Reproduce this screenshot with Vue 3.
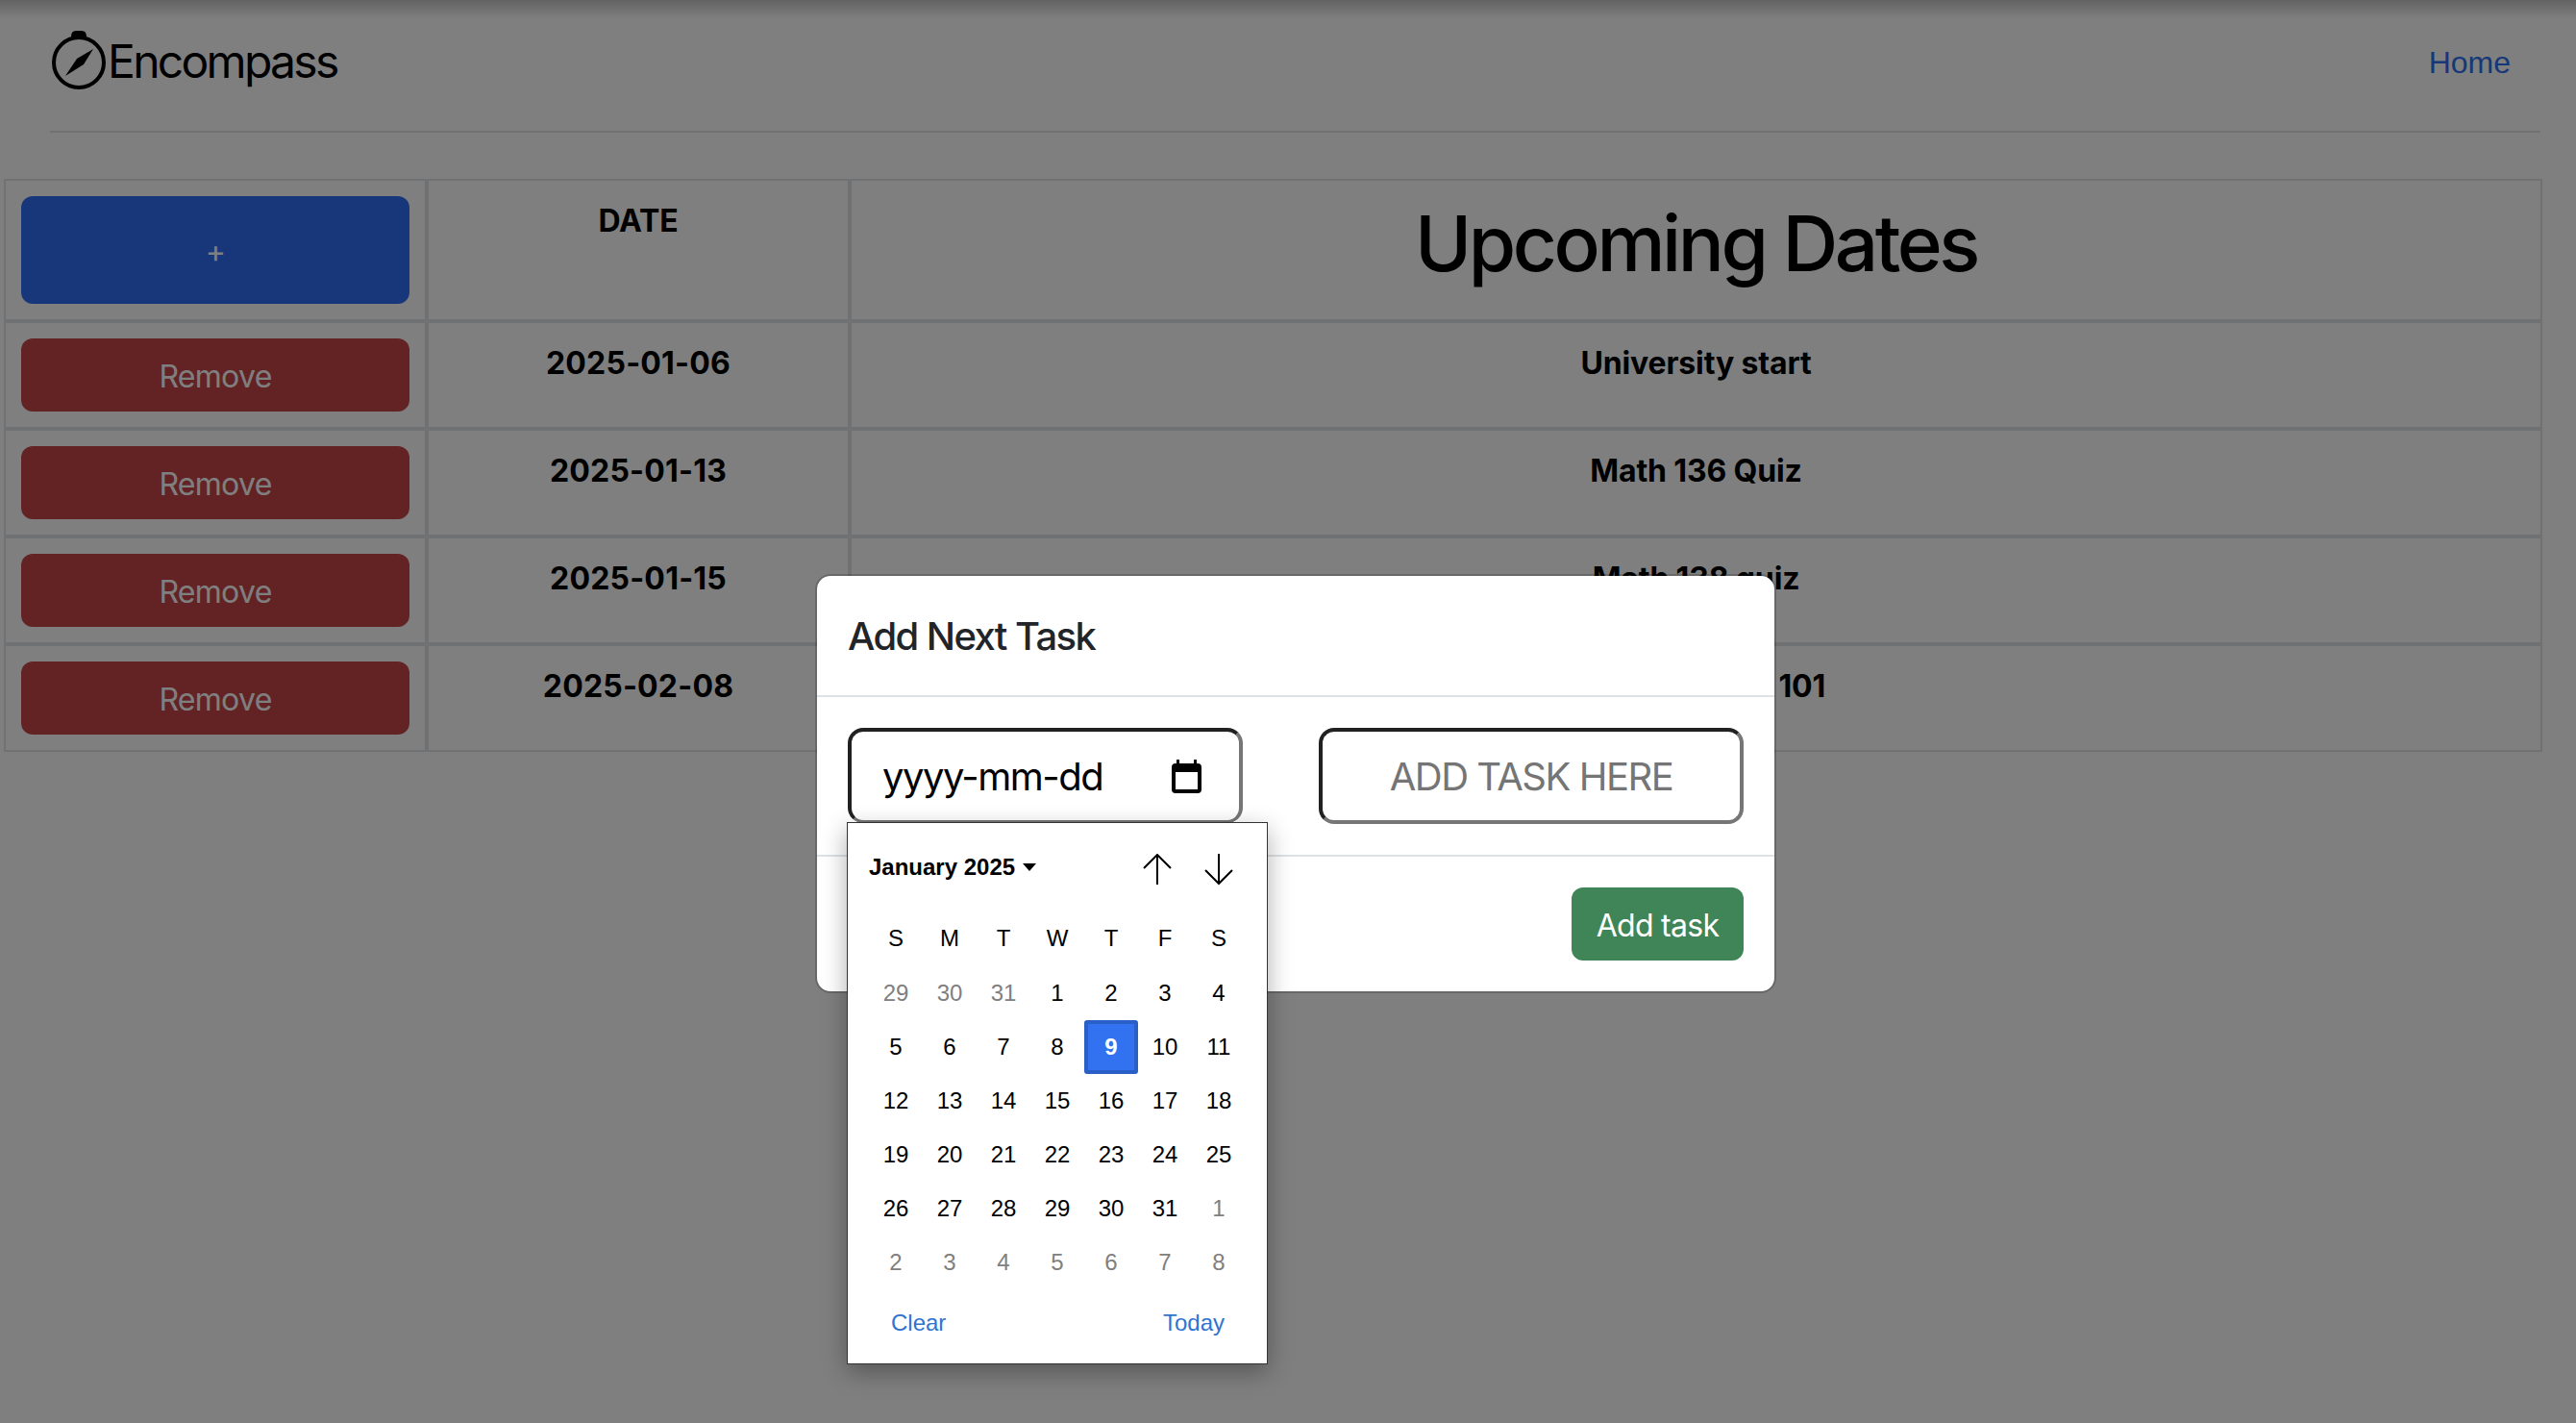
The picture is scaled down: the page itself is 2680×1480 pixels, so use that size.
<template>
  <div class="page">
    <header class="site-header">
      <a class="brand" href="#">
        <svg class="logo" viewBox="0 0 60 64" width="60" height="64">
          <circle cx="30" cy="33" r="26" fill="none" stroke="#000" stroke-width="4" />
          <path d="M22 6 Q22 0 27 0 L33 0 Q38 0 38 6 Z" fill="#000" />
          <path d="M16 47 L28 29 L45 19 L35 35 Z" fill="#000" />
        </svg>
        <span class="brand-name">Encompass</span>
      </a>
      <a class="home-link" href="#">Home</a>
    </header>

    <table class="dates">
      <thead>
        <tr>
          <th class="action-col"><button class="btn btn-add" type="button">+</button></th>
          <th class="date-col">DATE</th>
          <th><h1>Upcoming Dates</h1></th>
        </tr>
      </thead>
      <tbody>
        <tr v-for="row in rows" :key="row.date">
          <td><button class="btn btn-remove" type="button">Remove</button></td>
          <td class="date-cell">{{ row.date }}</td>
          <td>{{ row.name }}</td>
        </tr>
      </tbody>
    </table>

    <div class="backdrop"></div>
    <div class="top-shade"></div>

    <div class="modal">
      <div class="modal-header">Add Next Task</div>
      <div class="modal-body">
        <div class="date-input">
          <span>yyyy-mm-dd</span>
          <svg class="cal-icon" viewBox="0 0 31 35" width="31" height="35">
            <path d="M5 0h3v4h15V0h3v4h1q4 0 4 4v23q0 4-4 4H4q-4 0-4-4V8q0-4 4-4h1z M4 13v18h23V13z" fill="#000" fill-rule="evenodd" />
          </svg>
        </div>
        <input class="task-input" type="text" placeholder="ADD TASK HERE" />
      </div>
      <div class="modal-footer">
        <button class="btn btn-save" type="button">Add task</button>
      </div>
    </div>

    <div class="picker">
      <div class="picker-head">
        <div class="month">
          January 2025
          <span class="caret"></span>
        </div>
        <div class="arrows">
          <svg viewBox="0 0 30 33" width="30" height="33">
            <path d="M15 32V1M1 15L15 1l14 14" fill="none" stroke="#000" stroke-width="2" />
          </svg>
          <svg viewBox="0 0 30 33" width="30" height="33">
            <path d="M15 0v31M1 17l14 14 14-14" fill="none" stroke="#000" stroke-width="2" />
          </svg>
        </div>
      </div>
      <div class="week">
        <span v-for="(d, i) in weekdays" :key="i" class="cell">{{ d }}</span>
      </div>
      <div class="days">
        <span
          v-for="(d, i) in days"
          :key="i"
          class="cell"
          :class="{ muted: d.muted, selected: d.selected }"
        >{{ d.label }}</span>
      </div>
      <div class="picker-foot">
        <a href="#">Clear</a>
        <a href="#">Today</a>
      </div>
    </div>
  </div>
</template>

<script setup>
const rows = [
  { date: "2025-01-06", name: "University start" },
  { date: "2025-01-13", name: "Math 136 Quiz" },
  { date: "2025-01-15", name: "Math 138 quiz" },
  { date: "2025-02-08", name: "Anthropology 101" },
];

const weekdays = ["S", "M", "T", "W", "T", "F", "S"];

// 6 rows, starts on Dec 29
const days = [];
for (const n of [29, 30, 31]) days.push({ label: n, muted: true });
for (let n = 1; n <= 31; n++) days.push({ label: n, selected: n === 9 });
for (let n = 1; n <= 8; n++) days.push({ label: n, muted: true });
</script>

<style>
html,
body {
  margin: 0;
  background: #fff;
}
</style>

<style scoped>
.page {
  position: relative;
  width: 2680px;
  height: 1480px;
  overflow: hidden;
  background: #fff;
  font-family: Inter, "Liberation Sans", sans-serif;
  color: #000;
}

.site-header {
  display: flex;
  justify-content: space-between;
  align-items: center;
  box-sizing: border-box;
  height: 138px;
  margin: 0 37px 48px 52px;
  padding-bottom: 8px;
  border-bottom: 2px solid #dee2e6;
}
.brand {
  display: flex;
  align-items: center;
  color: #000;
  text-decoration: none;
}
.logo {
  flex: none;
}
.brand-name {
  font-size: 48px;
  line-height: 60px;
  letter-spacing: -2.7px;
}
.home-link {
  margin-right: 31px;
  padding-top: 3px;
  font-family: "Liberation Sans", sans-serif;
  font-size: 32px;
  color: #2f6ff0;
  text-decoration: none;
}

.dates {
  width: 2641px;
  margin-left: 4px;
  border-collapse: separate;
  border-spacing: 0;
  table-layout: fixed;
}
.dates th,
.dates td {
  box-sizing: border-box;
  padding: 16px;
  border: 2px solid #dee2e6;
  font-size: 32px;
  font-weight: 700;
  line-height: 52px;
  letter-spacing: -0.15px;
  text-align: center;
  vertical-align: top;
}
.dates td.date-cell {
  letter-spacing: 0.2px;
}
.action-col,
.date-col {
  width: 440px;
}
.dates h1 {
  margin: 0;
  font-size: 80px;
  font-weight: 500;
  line-height: 98px;
  letter-spacing: -3.45px;
}

.btn {
  display: block;
  padding: 3px 0 0;
  border: 0;
  border-radius: 12px;
  color: #fff;
  font-family: inherit;
  font-size: 32px;
  font-weight: 400;
  line-height: 48px;
  letter-spacing: -0.7px;
}
.btn-add,
.btn-remove {
  width: 100%;
}
.btn-add {
  height: 112px;
  background: #306ef4;
}
.btn-remove {
  height: 76px;
  background: #c64449;
}
.btn-save {
  width: 179px;
  height: 76px;
  background: #408558;
}

.backdrop {
  position: absolute;
  inset: 0;
  background: rgba(0, 0, 0, 0.5);
}
.top-shade {
  position: absolute;
  top: 0;
  left: 0;
  right: 0;
  height: 20px;
  background: linear-gradient(rgba(0, 0, 0, 0.22), rgba(0, 0, 0, 0));
}

.modal {
  position: absolute;
  top: 597px;
  left: 848px;
  box-sizing: border-box;
  width: 1000px;
  height: 436px;
  background: #fff;
  border: 2px solid rgba(0, 0, 0, 0.18);
  border-radius: 16px;
  background-clip: padding-box;
  color: #212529;
}
.modal-header {
  box-sizing: border-box;
  height: 126px;
  padding: 33px 32px 0;
  border-bottom: 2px solid #dee2e6;
  font-size: 40px;
  font-weight: 500;
  line-height: 60px;
  letter-spacing: -1.6px;
}
.modal-body {
  display: flex;
  justify-content: space-between;
  box-sizing: border-box;
  height: 166px;
  padding: 32px 32px 0 32px;
  border-bottom: 2px solid #dee2e6;
}
.date-input,
.task-input {
  box-sizing: border-box;
  border-width: 4px;
  border-style: solid;
  border-color: #212121 #767676 #767676 #212121;
  border-radius: 16px;
  font-family: Inter, "Liberation Sans", sans-serif;
  font-size: 40px;
  letter-spacing: -1.5px;
  color: #000;
}
.date-input {
  display: flex;
  align-items: center;
  justify-content: space-between;
  width: 411px;
  height: 99px;
  padding: 0 39px 0 32px;
  border-bottom-width: 3px;
}
.task-input {
  width: 442px;
  height: 100px;
  padding: 0 16px;
  text-align: center;
  outline: none;
  background: #fff;
}
.task-input::placeholder {
  color: #757575;
  opacity: 1;
}
.cal-icon {
  flex: none;
}
.modal-footer {
  display: flex;
  justify-content: flex-end;
  padding: 32px;
}

.picker {
  position: absolute;
  top: 855px;
  left: 881px;
  box-sizing: border-box;
  width: 438px;
  height: 564px;
  padding: 0 22px;
  background: #fff;
  border: 1px solid #333;
  box-shadow: 0 8px 24px rgba(0, 0, 0, 0.32);
  font-family: "Liberation Sans", sans-serif;
  font-size: 24px;
  color: #000;
}
.picker-head {
  display: flex;
  justify-content: space-between;
  align-items: flex-start;
  height: 91px;
  padding-top: 32px;
  box-sizing: border-box;
}
.month {
  display: flex;
  align-items: center;
  height: 28px;
  font-weight: 700;
  font-size: 24px;
}
.caret {
  width: 0;
  height: 0;
  margin-left: 8px;
  border-left: 7px solid transparent;
  border-right: 7px solid transparent;
  border-top: 8px solid #000;
}
.arrows {
  display: flex;
  gap: 34px;
  margin-right: 13px;
}
.week,
.days {
  display: grid;
  grid-template-columns: repeat(7, 56px);
}
.week {
  height: 58px;
}
.days {
  grid-auto-rows: 56px;
}
.cell {
  display: flex;
  align-items: center;
  justify-content: center;
  box-sizing: border-box;
}
.cell.muted {
  color: #808080;
}
.cell.selected {
  background: #3272f0;
  border: 4px solid #2b5fc8;
  border-radius: 3px;
  color: #fff;
  font-weight: 700;
}
.picker-foot {
  display: flex;
  justify-content: space-between;
  padding: 21px 22px 0 23px;
}
.picker-foot a {
  color: #2e74d0;
  text-decoration: none;
}
</style>
